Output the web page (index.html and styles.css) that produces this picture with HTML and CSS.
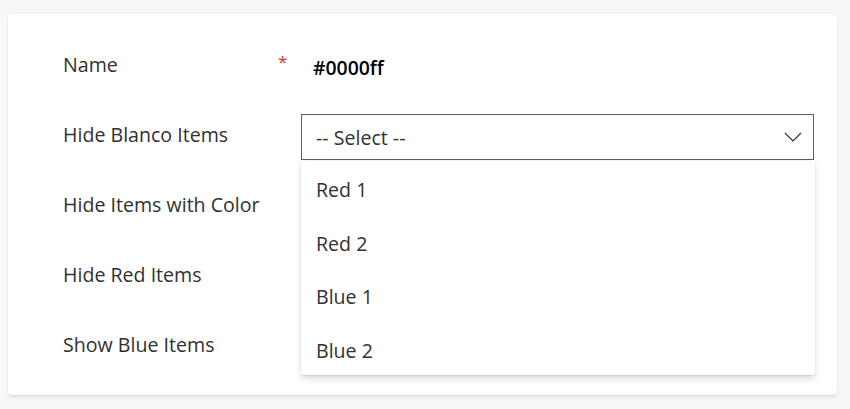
FILE: index.html
```html
<!DOCTYPE html>
<html>
<head>
<meta charset="utf-8">
<link rel="stylesheet" href="styles.css">
</head>
<body>
<div class="card">
  <div class="row">
    <div class="label">Name</div>
    <div class="req">*</div>
    <div class="value">#0000ff</div>
  </div>
  <div class="row">
    <div class="label">Hide Blanco Items</div>
    <div class="req"></div>
    <div class="field">
      <div class="select">
        <span>-- Select --</span>
        <svg class="chev" width="18" height="10" viewBox="0 0 18 10"><path d="M1 1 L9 9 L17 1" fill="none" stroke="#323130" stroke-width="1.2"/></svg>
      </div>
      <div class="menu">
        <div class="opt">Red 1</div>
        <div class="opt">Red 2</div>
        <div class="opt">Blue 1</div>
        <div class="opt">Blue 2</div>
      </div>
    </div>
  </div>
  <div class="row">
    <div class="label">Hide Items with Color</div>
  </div>
  <div class="row">
    <div class="label">Hide Red Items</div>
  </div>
  <div class="row">
    <div class="label">Show Blue Items</div>
  </div>
</div>
</body>
</html>
```
FILE: styles.css
```css
html, body {
  margin: 0;
  padding: 0;
  background: #f8f7f6;
}
body {
  padding: 14px 13px 14px 8px;
  font-family: "Open Sans", "Noto Sans", sans-serif;
  color: #323130;
}
.card {
  background: #fff;
  border-radius: 4px;
  box-shadow: 0 1.6px 3.6px rgba(0,0,0,0.08), 0 0.3px 0.9px rgba(0,0,0,0.06);
  height: 381px;
  box-sizing: border-box;
  padding: 30px 23px 0 55px;
  display: flex;
  flex-direction: column;
  gap: 24px;
}
.row {
  display: flex;
  align-items: center;
  height: 46px;
  flex: none;
}
.label {
  width: 215px;
  font-size: 19.6px;
  flex: none;
  padding-bottom: 6px;
}
.req {
  width: 23px;
  flex: none;
  color: #d13438;
  font-size: 17px;
  align-self: flex-start;
  padding-top: 6px;
  box-sizing: border-box;
}
.value {
  font-size: 19.4px;
  font-weight: 600;
  color: #000;
  margin-left: 12px;
}
.field {
  position: relative;
  flex: 1;
  height: 46px;
}
.select {
  height: 46px;
  box-sizing: border-box;
  border: 1px solid #605e5c;
  display: flex;
  align-items: center;
  justify-content: space-between;
  padding: 0 11px 0 14px;
  font-size: 19.6px;
}
.menu {
  position: absolute;
  top: 47px;
  left: 0;
  right: -1px;
  background: #fff;
  box-shadow: 0 3.2px 7.2px rgba(0,0,0,0.13), 0 0.6px 1.8px rgba(0,0,0,0.11);
  border-radius: 0 0 2px 2px;
  padding: 0;
  z-index: 2;
}
.opt {
  height: 53.5px;
  box-sizing: border-box;
  display: flex;
  align-items: center;
  padding: 4px 0 0 15px;
  font-size: 19.6px;
}
```
